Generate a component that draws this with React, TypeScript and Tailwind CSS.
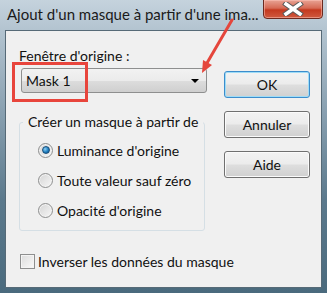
import React from "react";

const FONT = "font-['Lato',sans-serif]";

function Radio({ checked, label }: { checked?: boolean; label: string }) {
  return (
    <div className="flex items-center h-[20px] whitespace-nowrap">
      <span className="relative flex items-center justify-center w-[15px] h-[15px] rounded-full border border-[#8e8f8f] bg-[linear-gradient(135deg,#d4d4d4,#f7f7f7)] shadow-[inset_0_0_0_1px_#f4f4f4]">
        {checked && (
          <span className="w-[8px] h-[8px] rounded-full border border-[#1b4f7a] bg-[radial-gradient(circle_at_35%_35%,#8fd0f5,#1f7fc0_55%,#0d4c86)]" />
        )}
      </span>
      <span className="ml-[4px] text-[14px] text-[#111]">{label}</span>
    </div>
  );
}

function Button({ children, primary }: { children: React.ReactNode; primary?: boolean }) {
  return (
    <button
      className={
        "w-[86px] h-[27px] rounded-[3px] border text-[14px] text-[#111] bg-[linear-gradient(180deg,#f3f3f3_0%,#ececec_48%,#dedede_52%,#d0d0d0_100%)] " +
        (primary
          ? "border-[#3c8dcc] shadow-[inset_0_0_0_1px_#9fdcf6]"
          : "border-[#707070] shadow-[inset_0_0_0_1px_#fbfbfb]")
      }
    >
      {children}
    </button>
  );
}

export default function App() {
  return (
    <div
      className={`relative w-[327px] h-[293px] overflow-hidden flex flex-col bg-[linear-gradient(180deg,#c5d3dd_0px,#b3c4d0_30px,#8aa1b1_110px,#5b798c_200px,#4a6a7d_100%)] ${FONT}`}
    >
      {/* barre de titre */}
      <div className="h-[30px] flex items-start shrink-0">
        <p className="pl-[7px] pt-[3px] text-[15px] leading-[22px] text-[#1a1a1a] whitespace-nowrap">
          Ajout d'un masque à partir d'une ima...
        </p>
        <div className="ml-auto mr-[4px] w-[60px] h-[20px] -mt-px rounded-b-[4px] border border-[#6b2a20] bg-[linear-gradient(180deg,#e8a394_0%,#d66a55_45%,#c4391f_55%,#cf5a3f_100%)] flex items-center justify-center shadow-[inset_0_0_0_1px_rgba(255,200,190,0.5)] shrink-0">
          <svg width="22" height="14" viewBox="0 0 22 14">
            <path d="M4 2 L18 12 M18 2 L4 12" stroke="#5a5a5a" strokeWidth="5.5" strokeLinecap="square" />
            <path d="M4 2 L18 12 M18 2 L4 12" stroke="#fff" strokeWidth="3.5" strokeLinecap="square" />
          </svg>
        </div>
      </div>

      {/* zone cliente */}
      <div className="mx-[5px] h-[258px] border border-[#566a77] bg-[#f0f0f0] flex">
        <div className="w-[200px] pl-[13px] flex flex-col">
          <p className="mt-[15px] h-[20px] text-[14px] leading-[20px] text-[#111] whitespace-nowrap">Fenêtre d'origine :</p>
          <div className="mt-[2px] ml-[2px] w-[186px] h-[25px] rounded-[3px] border border-[#8e8f8f] bg-[linear-gradient(180deg,#f2f2f2_0%,#ebebeb_50%,#dddddd_51%,#cfcfcf_100%)] flex items-center pl-[4px] pr-[7px]">
            <span className="text-[14px] text-[#111]">Mask 1</span>
            <span className="ml-auto w-0 h-0 border-l-[4px] border-r-[4px] border-t-[4px] border-l-transparent border-r-transparent border-t-black" />
          </div>
          <fieldset className="mt-[19px] w-[186px] h-[119px] border border-[#d5dfe5] rounded-[3px]">
            <legend className="ml-[3px] px-[5px] text-[14px] leading-[20px] text-[#111] whitespace-nowrap">Créer un masque à partir de</legend>
            <div className="pl-[18px] pt-[8px] flex flex-col gap-[10px]">
              <Radio checked label="Luminance d'origine" />
              <Radio label="Toute valeur sauf zéro" />
              <Radio label="Opacité d'origine" />
            </div>
          </fieldset>
          <div className="mt-[20px] flex items-center h-[20px] whitespace-nowrap">
            <span className="ml-[1px] w-[15px] h-[15px] shrink-0 border border-[#8e8f8f] bg-[linear-gradient(135deg,#dcdcdc,#fafafa)] shadow-[inset_0_0_0_1px_#f4f4f4]" />
            <span className="ml-[3px] text-[14px] text-[#111]">Inverser les données du masque</span>
          </div>
        </div>
        <div className="ml-[18px] pt-[40px] flex flex-col gap-[13px]">
          <Button primary>OK</Button>
          <Button>Annuler</Button>
          <Button>Aide</Button>
        </div>
      </div>

      {/* annotations en rouge */}
      <div className="absolute left-[12px] top-[62px] w-[76px] h-[40px] border-[3px] border-[#e8453c]" />
      <svg className="absolute left-0 top-0 pointer-events-none" width="327" height="293">
        <line x1="232" y1="20" x2="207" y2="63" stroke="#e5463c" strokeWidth="3" strokeLinecap="round" />
        <polygon points="202,73 212,65 203,60" fill="#e5463c" />
      </svg>
    </div>
  );
}
